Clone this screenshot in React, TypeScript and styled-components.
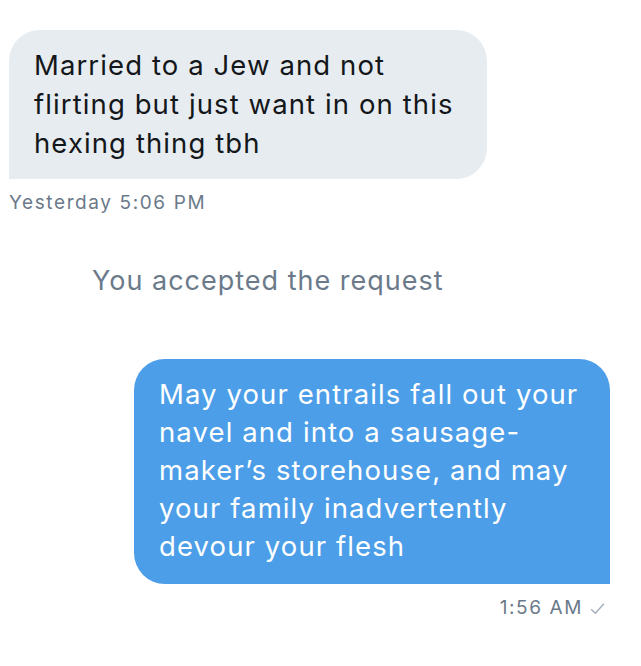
import styled, {createGlobalStyle} from 'styled-components'

const GlobalStyle = createGlobalStyle`
  body {
    margin: 0;
    background: #ffffff;
    font-family: Inter, "Noto Sans", "Liberation Sans", sans-serif;
    -webkit-font-smoothing: antialiased;
  }
`

export default function App() {
  return (
    <Page>
      <GlobalStyle />
      <Bubble $side="left">
        {'Married to a Jew and not\nflirting but just want in on this\nhexing thing tbh'}
      </Bubble>
      <Meta $side="left">Yesterday 5:06 PM</Meta>

      <Notice>You accepted the request</Notice>

      <Bubble $side="right">
        {'May your entrails fall out your\nnavel and into a sausage-\nmaker\u2019s storehouse, and may\nyour family inadvertently\ndevour your flesh'}
      </Bubble>
      <Meta $side="right">
        1:56 AM
        <Check viewBox="0 0 16 16">
          <path d="M2 8.6 L6 12.4 L14 3.6" />
        </Check>
      </Meta>
    </Page>
  )
}

const Page = styled.div`
  width: 641px;
  height: 666px;
  display: flex;
  flex-direction: column;
  padding-top: 30px;
  box-sizing: border-box;
  overflow: hidden;
`

const Bubble = styled.div<{$side: 'left' | 'right'}>`
  box-sizing: border-box;
  white-space: pre-line;
  font-size: 27.5px;
  letter-spacing: 1.1px;
  border-radius: 31px;
  ${(p) =>
    p.$side === 'left'
      ? `
    align-self: flex-start;
    margin-left: 9px;
    width: 478px;
    padding: 16px 8px 16px 25px;
    line-height: 39px;
    background: #e6ecf0;
    color: #14171a;
    border-bottom-left-radius: 0;
  `
      : `
    align-self: flex-end;
    margin-top: 62px;
    margin-right: 31px;
    width: 476px;
    padding: 16px 8px 19px 25px;
    line-height: 38px;
    background: #4c9ee8;
    color: #ffffff;
    border-bottom-right-radius: 0;
  `}
`

const Meta = styled.div<{$side: 'left' | 'right'}>`
  display: flex;
  align-items: center;
  gap: 6px;
  font-size: 19px;
  letter-spacing: 1.6px;
  line-height: 24px;
  color: #6b7a8a;
  ${(p) =>
    p.$side === 'left'
      ? `
    align-self: flex-start;
    margin: 12px 0 0 9px;
  `
      : `
    align-self: flex-end;
    margin: 12px 35px 0 0;
  `}
`

const Check = styled.svg`
  width: 17px;
  height: 17px;
  fill: none;
  stroke: #a3adb8;
  stroke-width: 1.3;
`

const Notice = styled.div`
  margin: 50px 0 0 92px;
  font-size: 27px;
  letter-spacing: 1px;
  line-height: 32px;
  color: #6b7a8a;
`
